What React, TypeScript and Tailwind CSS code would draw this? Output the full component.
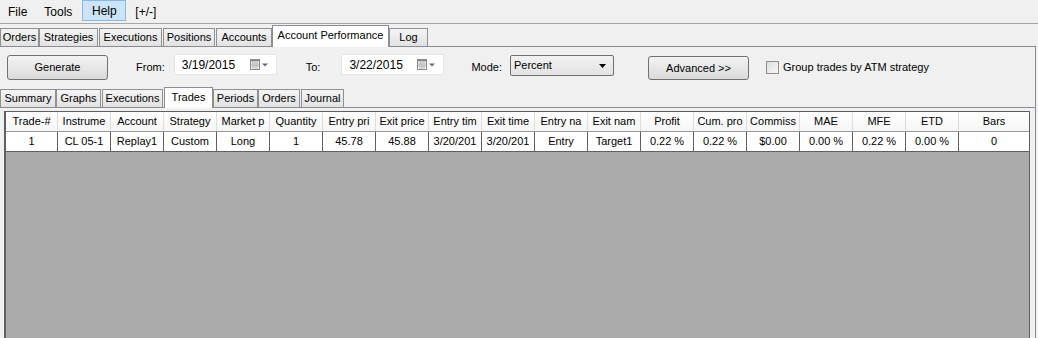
import React from 'react';

const outerTabs = [
  { label: 'Orders', cls: 'w-[39px]' },
  { label: 'Strategies', cls: 'w-[59px]' },
  { label: 'Executions', cls: 'w-[63px] ml-[1px]' },
  { label: 'Positions', cls: 'w-[52px] ml-[1px]' },
  { label: 'Accounts', cls: 'w-[56px] ml-[1px]' },
  { label: 'Account Performance', cls: 'w-[117px]', selected: true },
  { label: 'Log', cls: 'w-[39px]' },
];

const innerTabs = [
  { label: 'Summary', cls: 'w-[56px]' },
  { label: 'Graphs', cls: 'w-[45px]' },
  { label: 'Executions', cls: 'w-[61px] ml-[1px]' },
  { label: 'Trades', cls: 'w-[49px] ml-[1px]', selected: true },
  { label: 'Periods', cls: 'w-[45px]' },
  { label: 'Orders', cls: 'w-[42px]' },
  { label: 'Journal', cls: 'w-[43px] ml-[1px]' },
];

const columns = [
  'Trade-#', 'Instrume', 'Account', 'Strategy', 'Market p', 'Quantity', 'Entry pri', 'Exit price',
  'Entry tim', 'Exit time', 'Entry na', 'Exit nam', 'Profit', 'Cum. pro', 'Commiss', 'MAE', 'MFE', 'ETD', 'Bars',
];

const row = [
  '1', 'CL 05-1', 'Replay1', 'Custom', 'Long', '1', '45.78', '45.88',
  '3/20/201', '3/20/201', 'Entry', 'Target1', '0.22 %', '0.22 %', '$0.00', '0.00 %', '0.22 %', '0.00 %', '0',
];

function colWidth(i: number) {
  if (i === 0) return 'w-[52px]';
  if (i === columns.length - 1) return 'flex-1';
  return 'w-[53px]';
}

function Tab({ label, cls, selected, tall }: { label: string; cls: string; selected?: boolean; tall: string }) {
  if (selected) {
    return (
      <div className={`${cls} ${tall} -mb-px relative z-10 bg-white border border-b-0 border-[#898c95] flex items-center justify-center pb-[2px] text-[11px] text-black`}>
        {label}
      </div>
    );
  }
  return (
    <div className={`${cls} h-[18px] bg-gradient-to-b from-[#f4f4f4] to-[#e2e2e2] border border-b-0 border-[#8e9096] flex items-center justify-center text-[11px] text-black`}>
      {label}
    </div>
  );
}

function DatePicker({ value }: { value: string }) {
  return (
    <div className="w-[103px] h-[21px] bg-white border border-[#e6e6e6] flex items-center pl-[7px] pr-[8px]">
      <span className="text-[12px] text-black flex-1">{value}</span>
      <svg width="18" height="11" viewBox="0 0 18 11">
        <rect x="0.5" y="0.5" width="9" height="10" fill="#fafafa" stroke="#8a8a8a" />
        <rect x="0.5" y="0.5" width="9" height="2" fill="#8a8a8a" />
        <path d="M3 3v7M5 3v7M7 3v7M1 5h8M1 7h8" stroke="#b5b5b5" strokeWidth="1" />
        <path d="M12 4.5h6l-3 3z" fill="#5a6c8c" />
      </svg>
    </div>
  );
}

export default function App() {
  return (
    <div className="w-[1038px] h-[338px] bg-[#f0f0f0] flex flex-col overflow-hidden font-['Liberation_Sans',Arial,sans-serif] text-black">
      {/* menu */}
      <div className="h-[24px] border-b border-[#a7a7a7] flex items-center text-[12px]">
        <span className="ml-[8px]">File</span>
        <span className="ml-[17px]">Tools</span>
        <span className="ml-[10px] w-[44px] h-[21px] -mt-[2px] bg-[#cce4f7] border border-[#85b7e8] flex items-center justify-center">Help</span>
        <span className="ml-[9px]">[+/-]</span>
      </div>

      {/* outer tabs */}
      <div className="h-[22px] flex items-end">
        {outerTabs.map(t => (
          <Tab key={t.label} label={t.label} cls={t.cls} selected={t.selected} tall="h-[22px]" />
        ))}
      </div>

      <div className="w-[1036px] flex-1 border-t border-r border-[#898c95] flex flex-col min-h-0">
        {/* controls */}
        <div className="h-[38px] pt-[7px] flex items-start text-[11px]">
          <button className="ml-[7px] mt-[1px] w-[101px] h-[25px] rounded-[3px] border border-[#707070] bg-gradient-to-b from-[#f3f3f3] to-[#dadada] text-[11px]">
            Generate
          </button>
          <span className="ml-[28px] mt-[3px] h-[21px] flex items-center">From:</span>
          <div className="ml-[9px]">
            <DatePicker value="3/19/2015" />
          </div>
          <span className="ml-[29px] mt-[3px] h-[21px] flex items-center">To:</span>
          <div className="ml-[21px]">
            <DatePicker value="3/22/2015" />
          </div>
          <span className="ml-[27px] mt-[3px] h-[21px] flex items-center">Mode:</span>
          <div className="ml-[8px] mt-[1px] w-[104px] h-[21px] rounded-[2px] border border-[#707070] bg-gradient-to-b from-[#f2f2f2] to-[#e3e3e3] flex items-center pl-[3px] pr-[6px]">
            <span className="flex-1 text-[11px]">Percent</span>
            <svg width="8" height="4" viewBox="0 0 8 4">
              <path d="M0 0h7l-3.5 4z" fill="#000" />
            </svg>
          </div>
          <button className="ml-[34px] mt-[2px] w-[101px] h-[24px] rounded-[3px] border border-[#707070] bg-gradient-to-b from-[#f3f3f3] to-[#dadada] text-[11px]">
            Advanced &gt;&gt;
          </button>
          <div className="ml-[17px] mt-[7px] w-[13px] h-[13px] border border-[#8f8f8f] bg-gradient-to-br from-[#dcdcdc] to-[#f8f8f8]" />
          <span className="ml-[4px] mt-[5px] text-[11px]">Group trades by ATM strategy</span>
        </div>

        {/* inner tabs */}
        <div className="h-[22px] flex items-end">
          {innerTabs.map(t => (
            <Tab key={t.label} label={t.label} cls={t.cls} selected={t.selected} tall="h-[21px]" />
          ))}
        </div>

        <div className="flex-1 border-t border-[#898c95] pt-[3px] pl-[4px] pr-[5px] flex flex-col min-h-0">
          {/* grid */}
          <div className="flex-1 bg-[#ababab] border-t border-l-2 border-r border-[#5f5f5f] flex flex-col text-[11px]">
            <div className="flex h-[20px] bg-gradient-to-b from-white to-[#f6f6f6] border-b border-[#9a9a9a]">
              {columns.map((c, i) => (
                <div
                  key={c}
                  className={`${colWidth(i)} flex items-center justify-center overflow-hidden whitespace-nowrap ${i < columns.length - 1 ? 'border-r border-[#dcdcdc]' : ''}`}
                >
                  {c}
                </div>
              ))}
            </div>
            <div className="flex h-[20px] bg-white border-b border-[#5f5f5f]">
              {row.map((v, i) => (
                <div
                  key={i}
                  className={`${colWidth(i)} flex items-center justify-center overflow-hidden whitespace-nowrap ${i < row.length - 1 ? 'border-r border-[#5f5f5f]' : ''}`}
                >
                  {v}
                </div>
              ))}
            </div>
          </div>
        </div>
      </div>
    </div>
  );
}
